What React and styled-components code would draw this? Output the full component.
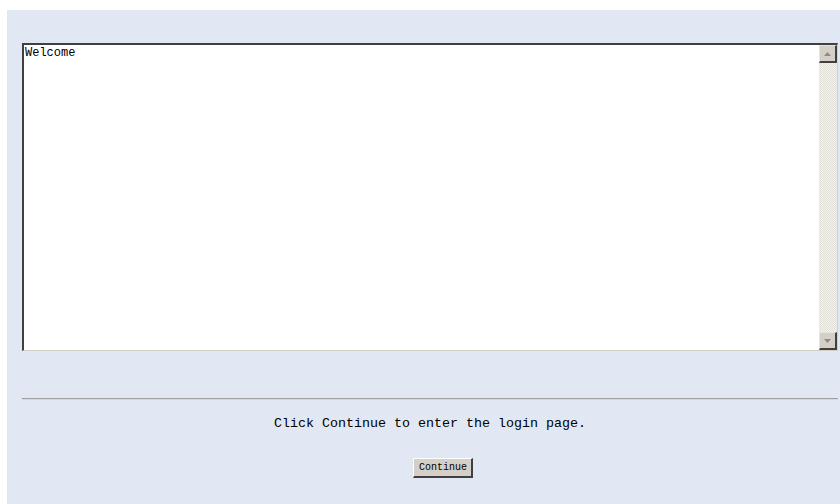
import React from "react";
import styled, { createGlobalStyle } from "styled-components";

const Global = createGlobalStyle`
  html, body { margin: 0; padding: 0; background: #ffffff; }
  body { font-family: "Liberation Mono", "DejaVu Sans Mono", monospace; }
`;

const Page = styled.div`
  margin: 10px 0 0 7px;
  min-height: 494px;
  background: #e1e8f3;
  padding: 33px 2px 0 15px;
  box-sizing: border-box;
`;

const TextBox = styled.div`
  display: flex;
  height: 308px;
  box-sizing: border-box;
  background: #ffffff;
  border-top: 2px solid #404040;
  border-left: 2px solid #404040;
  border-right: 1px solid #d4d0c8;
  border-bottom: 1px solid #d4d0c8;
`;

const TextBody = styled.div`
  flex: 1;
  padding: 1px 0 0 1px;
  font-family: "Liberation Mono", "DejaVu Sans Mono", monospace;
  font-size: 12px;
  line-height: 14px;
  color: #000;
`;

const ScrollBar = styled.div`
  width: 18px;
  display: flex;
  flex-direction: column;
  background-color: #ecebe5;
  background-image: repeating-conic-gradient(#f4f3ee 0 25%, #e1e0d8 0 50%);
  background-size: 2px 2px;
`;

const ArrowButton = styled.div`
  height: 18px;
  box-sizing: border-box;
  background: #d4d0c8;
  border-top: 1px solid #e6e4de;
  border-left: 1px solid #e6e4de;
  border-right: 2px solid #404040;
  border-bottom: 2px solid #404040;
  display: flex;
  align-items: center;
  justify-content: center;
`;

const Track = styled.div`
  flex: 1;
`;

const Rule = styled.div`
  margin-top: 47px;
  border-top: 1px solid #a0a0a0;
  border-bottom: 1px solid #d8d8d8;
`;

const Message = styled.p`
  margin: 16px 0 0;
  text-align: center;
  font-size: 13.33px;
  line-height: 16px;
  color: #000;
`;

const Actions = styled.div`
  display: flex;
  justify-content: center;
  margin-top: 26px;
  padding-left: 26px;
`;

const Button = styled.button`
  font-family: "Liberation Mono", "DejaVu Sans Mono", monospace;
  font-size: 10px;
  height: 20px;
  padding: 0 4px 0 5px;
  background: #d4d0c8;
  color: #000;
  border-top: 1px solid #ffffff;
  border-left: 1px solid #ffffff;
  border-right: 2px solid #404040;
  border-bottom: 2px solid #404040;
  border-radius: 0;
`;

const Arrow = ({ down }) => (
  <svg width="7" height="4" viewBox="0 0 7 4">
    <path d={down ? "M0 0h7L3.5 4z" : "M3.5 0L7 4H0z"} fill="#8a8a8a" />
  </svg>
);

export default function App() {
  return (
    <>
      <Global />
      <Page>
        <TextBox>
          <TextBody>Welcome</TextBody>
          <ScrollBar>
            <ArrowButton>
              <Arrow />
            </ArrowButton>
            <Track />
            <ArrowButton>
              <Arrow down />
            </ArrowButton>
          </ScrollBar>
        </TextBox>
        <Rule />
        <Message>Click Continue to enter the login page.</Message>
        <Actions>
          <Button>Continue</Button>
        </Actions>
      </Page>
    </>
  );
}
